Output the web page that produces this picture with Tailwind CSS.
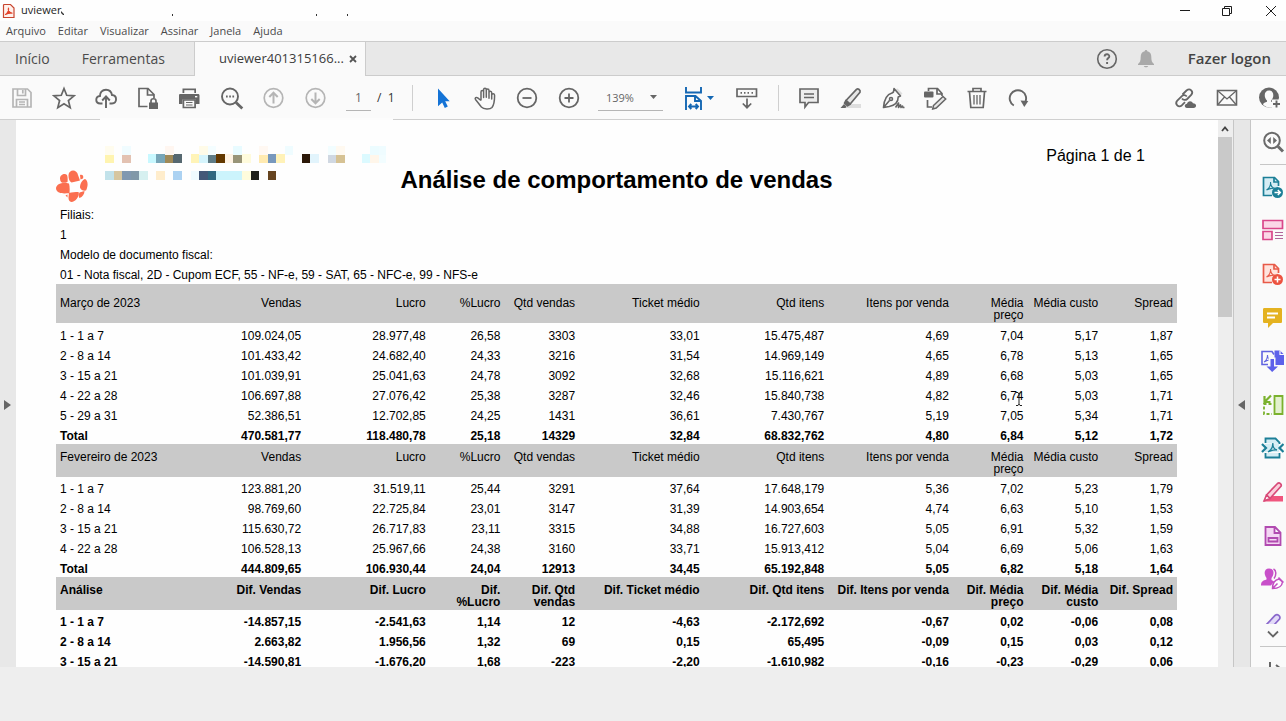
<!DOCTYPE html>
<html lang="pt-BR">
<head>
    <meta charset="UTF-8">
    <meta name="viewport" content="width=device-width, initial-scale=1.0">
    <title>uviewer</title>
    <script src="https://cdn.jsdelivr.net/npm/@tailwindcss/browser@4"></script>
</head>
<body class="h-screen flex flex-col overflow-hidden bg-[#eeeeee] text-[#4b4b4b] font-['Open_Sans','Noto_Sans',sans-serif]">

    <!-- Title bar -->
    <header class="h-[21px] shrink-0 flex items-center bg-[#fefefe] pl-[2px]">
        <svg class="w-[13px] h-4" viewBox="0 0 13 16" fill="none">
            <path d="M2 1.500h6.500L12 5v9.500H1.500V2z" fill="#fff1ec" stroke="#c8452f" stroke-width="1.200"/>
            <path d="M3.500 11.500c2-1 3.500-4 3-6.500-.8 2.500 1 5 3.500 5.200-2.500-.4-4.500.2-6.500 1.300z" fill="#e2442c" stroke="#e2442c" stroke-width="1.200" stroke-linejoin="round"/>
        </svg>
        <h1 class="ml-[6px] text-[11px] font-medium text-[#1c1c1c]">uviewer</h1>
        <svg class="w-[290px] h-3" viewBox="0 0 290 12" fill="#333">
            <path d="M0 6l3 3v1H2L0 8zM111 9h1v2h-1zM255 9h1v2h-1zM286 9h1v2h-1z"/>
        </svg>
        <div class="ml-auto flex text-[#1c1c1c]">
            <button class="w-[42px] flex justify-center" aria-label="Minimizar">
                <svg class="w-3 h-3" viewBox="0 0 12 12" stroke="currentColor"><path d="M1 5.500h10"/></svg>
            </button>
            <button class="w-[42px] flex justify-center" aria-label="Restaurar">
                <svg class="w-3 h-3" viewBox="0 0 12 12" fill="none" stroke="currentColor"><path d="M1.500 3.500h7v7h-7zM3.500 3V1.500h7v7H9"/></svg>
            </button>
            <button class="w-[38px] flex justify-end pr-[9px]" aria-label="Fechar">
                <svg class="w-3 h-3" viewBox="0 0 12 12" stroke="currentColor"><path d="M1 1l10 10M11 1L1 11"/></svg>
            </button>
        </div>
    </header>

    <!-- Menu -->
    <nav class="h-[20px] shrink-0 flex items-center gap-3 bg-[#fafafa] pl-[6px] text-[11px] leading-5">
        <button>Arquivo</button>
        <button>Editar</button>
        <button>Visualizar</button>
        <button>Assinar</button>
        <button>Janela</button>
        <button>Ajuda</button>
    </nav>

    <!-- Tabs -->
    <div class="h-[35px] shrink-0 flex bg-[#e8e8e8] border-t border-[#cccccc] text-[14px]">
        <div class="flex w-[195px] border-b border-r border-[#cccccc] pl-[15px] gap-8">
            <button>Início</button>
            <button>Ferramentas</button>
        </div>
        <div class="flex w-[170px] items-center justify-between bg-[#fafafa] pl-6 pr-2">
            <button class="text-[13px] text-[#3c3c3c]">uviewer401315166...</button>
            <button aria-label="Fechar guia">
                <svg class="w-2 h-2" viewBox="0 0 8 8" stroke="#555" stroke-width="1.800"><path d="M1 1l6 6M7 1L1 7"/></svg>
            </button>
        </div>
        <div class="flex flex-1 items-center justify-end border-b border-l border-[#cccccc] pr-[15px]">
            <button aria-label="Ajuda">
                <svg class="w-[22px] h-[22px]" viewBox="0 0 22 22" fill="none" stroke="#666" stroke-width="1.600">
                    <circle cx="11" cy="11" r="9.300"/>
                    <path d="M8.600 8.500c.2-3 4.800-2.800 4.700-.1 0 1.700-2.200 1.700-2.200 3.800M11.100 14v2" stroke-width="1.900"/>
                </svg>
            </button>
            <button class="ml-[18px]" aria-label="Notificações">
                <svg class="w-5 h-5" viewBox="0 0 20 20" fill="#a9a9a9"><path d="M10 1c.9 0 1.300.6 1.300 1.300 3 .7 4 3 4 5.700 0 4 .8 5.500 2.700 7v1H2v-1c1.900-1.500 2.700-3 2.700-7 0-2.700 1-5 4-5.700C8.700 1.600 9.100 1 10 1zM7.800 17h4.400c-.4 1.800-4 1.800-4.400 0z"/></svg>
            </button>
            <button class="ml-8 text-[15px] font-semibold text-[#444]">Fazer logon</button>
        </div>
    </div>

    <!-- Toolbar -->
    <div class="relative h-[44px] shrink-0 flex items-center bg-[#fafafa] border-b border-[#cfcfcf] pl-[1px] text-[#666]">
        <button class="w-[42px] shrink-0 flex justify-center text-[#b5b5b5]" aria-label="Salvar">
            <svg class="w-6 h-6" viewBox="0 0 24 24" fill="none" stroke="currentColor" stroke-width="1.700"><path d="M3 3h14.500L21 6.500V21H3zM7.500 3v6.500h8V3M12.800 4v3.500M6.500 21v-7.500h11V21M9 16h6M9 18.500h6"/></svg>
        </button>
        <button class="w-[42px] shrink-0 flex justify-center" aria-label="Favorito">
            <svg class="w-6 h-6" viewBox="0 0 24 24" fill="none" stroke="currentColor" stroke-width="1.700"><path d="M12 2.500l2.700 6.800 7.300.5-5.600 4.700 1.800 7.100-6.200-3.900-6.200 3.900 1.800-7.100L2 9.800l7.300-.5z"/></svg>
        </button>
        <button class="w-[42px] shrink-0 flex justify-center" aria-label="Enviar para a nuvem">
            <svg class="w-6 h-6" viewBox="0 0 24 24" fill="none" stroke="currentColor" stroke-width="1.900"><path d="M8.500 17.500H6.200C1 17.300 1 10.500 6 10c-.2-3.200 2-6.300 6-6.300 3.500 0 5.500 2.300 6 5.300 5.500.2 5.300 8.500 0 8.500h-2.500M12 22V10.800M8.200 14.500l3.800-4 3.800 4"/></svg>
        </button>
        <button class="w-[42px] shrink-0 flex justify-center" aria-label="Proteger documento">
            <svg class="w-6 h-6" viewBox="0 0 24 24" fill="none" stroke="currentColor" stroke-width="1.700"><path d="M11.500 20.500H3V2.500h9l6 6V12M11.500 3v6H18"/><path d="M13 16.500h9V23h-9z" fill="currentColor" stroke="none"/><path d="M15 17v-2c0-3 5-3 5 0v2"/></svg>
        </button>
        <button class="w-[42px] shrink-0 flex justify-center" aria-label="Imprimir">
            <svg class="w-6 h-6" viewBox="0 0 24 24" fill="none"><path d="M4.500 2.500h13.500V7H4.500zM2 8h18c1 0 1.500.6 1.500 1.500V18H18v-4.500H4.500V18H1V9.500C1 8.600 1.300 8 2 8z" fill="currentColor"/><path d="M6.300 4.200h10V7h-10z" fill="#fafafa"/><path d="M5.400 14h11.700v7.500H5.400z" fill="#fafafa" stroke="currentColor" stroke-width="1.700"/><path d="M8 16.500h6.500M8 19h6.500" stroke="currentColor" stroke-width="1.200"/><path d="M17 10.700h2.300" stroke="#fafafa" stroke-width="1.400"/></svg>
        </button>
        <button class="w-[42px] shrink-0 flex justify-center" aria-label="Localizar">
            <svg class="w-6 h-6" viewBox="0 0 24 24" fill="none" stroke="currentColor" stroke-width="1.900"><circle cx="10" cy="10.500" r="8"/><path d="M6 10.500h1.700M9.200 10.500h1.700M12.400 10.500h1.700"/><path d="M16 16.500l6.300 6" stroke-width="2.800"/></svg>
        </button>
        <button class="w-[42px] shrink-0 flex justify-center text-[#b5b5b5]" aria-label="Página anterior">
            <svg class="w-6 h-6" viewBox="0 0 24 24" fill="none" stroke="currentColor" stroke-width="1.700"><circle cx="11.500" cy="12" r="9.300"/><path d="M11.500 17.500V7M7.300 11l4.200-4.300 4.200 4.300" stroke-width="2"/></svg>
        </button>
        <button class="w-[42px] shrink-0 flex justify-center text-[#b5b5b5]" aria-label="Próxima página">
            <svg class="w-6 h-6" viewBox="0 0 24 24" fill="none" stroke="currentColor" stroke-width="1.700"><circle cx="11.500" cy="12" r="9.300"/><path d="M11.500 6.500V17M7.300 13l4.200 4.300 4.200-4.300" stroke-width="2"/></svg>
        </button>
        <input type="text" value="1" aria-label="Página" class="ml-[9px] w-[25px] h-[26px] shrink-0 border-b border-[#b5b5b5] text-center text-[12px]">
        <span class="ml-[6px] w-[17px] shrink-0 whitespace-nowrap text-[12px] text-[#333]">/&nbsp; 1</span>
        <div class="ml-[18px] w-px h-[26px] shrink-0 bg-[#cfcfcf]"></div>
        <button class="ml-[9px] w-[42px] shrink-0 flex justify-center" aria-label="Selecionar">
            <svg class="w-6 h-6" viewBox="0 0 24 24" fill="#1473d6"><path d="M7 2.500v17.800l4.200-3.800 2.600 5.500 3-1.400-2.600-5.300h4.500z"/></svg>
        </button>
        <button class="w-[42px] shrink-0 flex justify-center" aria-label="Mão">
            <svg class="w-6 h-6" viewBox="0 0 24 24" fill="none" stroke="currentColor" stroke-width="1.500" stroke-linejoin="round"><path d="M8 14.500V6c0-2 2.600-2 2.600 0v5.500V3.800c0-2 2.700-2 2.700 0v7.500V4.500c0-2 2.700-2 2.700 0v7.700V6.500c.2-1.700 2.700-1.700 2.700.3V13V9c.3-1.700 3-1.500 2.900.5 0 6-.3 9-2.600 12-2 2-8.400 2-10.600-.5L2.500 13.500c-1-1.500.8-2.700 2.200-1.700L8 14.500"/></svg>
        </button>
        <button class="w-[42px] shrink-0 flex justify-center" aria-label="Menos zoom">
            <svg class="w-6 h-6" viewBox="0 0 24 24" fill="none" stroke="currentColor" stroke-width="1.800"><circle cx="12" cy="12" r="9.300"/><path d="M7.500 12h9"/></svg>
        </button>
        <button class="w-[42px] shrink-0 flex justify-center" aria-label="Mais zoom">
            <svg class="w-6 h-6" viewBox="0 0 24 24" fill="none" stroke="currentColor" stroke-width="1.800"><circle cx="12" cy="12" r="9.300"/><path d="M7.500 12h9M12 7.500v9"/></svg>
        </button>
        <div class="relative ml-2 w-[65px] shrink-0">
            <select aria-label="Zoom" class="w-full h-[26px] appearance-none border-b border-[#b5b5b5] pl-2 text-[11px]">
                <option>139%</option>
            </select>
            <svg class="pointer-events-none absolute right-[6px] top-[11px] w-[7px] h-1" viewBox="0 0 7 4" fill="#666"><path d="M0 0h7L3.500 4z"/></svg>
        </div>
        <button class="ml-[21px] w-[31px] shrink-0 flex items-center gap-px text-[#1467b3]" aria-label="Ajustar largura">
            <svg class="w-[22px] h-6" viewBox="0 0 22 24" fill="none" stroke="currentColor" stroke-width="1.900"><path d="M2 1v5.500h15V1M2 24V10h9.500l5.500 5v9M11 10.500V15h5.500M5 20.500h9M7.300 18L5 20.500 7.300 23M11.700 18l2.300 2.500-2.300 2.500" stroke-linejoin="miter"/></svg>
            <svg class="w-[7px] h-1" viewBox="0 0 7 4" fill="currentColor"><path d="M0 0h7L3.500 4z"/></svg>
        </button>
        <button class="ml-[11px] w-[42px] shrink-0 flex justify-center" aria-label="Rolagem">
            <svg class="w-6 h-6" viewBox="0 0 24 24" fill="none" stroke="currentColor" stroke-width="1.700"><path d="M2 3h19.500v7.500H2zM5.500 6.800H7M9 6.800h1.500M12.500 6.800H14M16.500 6.800H18M12 12.500v9M7.800 17.500l4.200 4.200 4.200-4.200"/></svg>
        </button>
        <div class="ml-[10px] w-px h-[26px] shrink-0 bg-[#cfcfcf]"></div>
        <button class="ml-[9px] w-[42px] shrink-0 flex justify-center" aria-label="Comentário">
            <svg class="w-6 h-6" viewBox="0 0 24 24" fill="#ededed" stroke="currentColor" stroke-width="1.700"><path d="M3 3h18v13.500h-9.500L8 21v-4.500H3zM7 8h10M7 11.500h10"/></svg>
        </button>
        <button class="w-[42px] shrink-0 flex justify-center" aria-label="Realçar">
            <svg class="w-6 h-6" viewBox="0 0 24 24" fill="none" stroke="currentColor" stroke-width="1.700" stroke-linejoin="round"><path d="M11 18h11v4H6z" fill="#dedede" stroke="none"/><path d="M7 14.500L17.500 3.300c1.500-1.200 4.300.8 3.500 3L11 18.200z" fill="#e6e6e6"/><path d="M7 14.500l4 3.700-2.500 1.600-3-2.700z" fill="currentColor"/><path d="M5 18l2.500 2.500-1 1.500H1.500z" fill="currentColor" stroke="none"/></svg>
        </button>
        <button class="w-[42px] shrink-0 flex justify-center" aria-label="Assinar">
            <svg class="w-6 h-6" viewBox="0 0 24 24" fill="none" stroke="currentColor" stroke-width="1.600" stroke-linejoin="round"><path d="M14 3.500l2.500-1 5 5-2.500 2.500z" fill="#dedede" stroke="none"/><path d="M13 2.500l6.500 7.500-2.300 1c0 5-3 8.300-9 9.500L2.500 21.500c.5-7 2-12.700 8.500-14.500l1.500-1zM2.500 21.500l6-7"/><circle cx="10" cy="13" r="1.500"/><path d="M14.500 21.500l3-4.500v4.500l2-2.700.5 2.700 1.500-1.500.5 1.500h1.500"/></svg>
        </button>
        <button class="w-[42px] shrink-0 flex justify-center" aria-label="Editar PDF">
            <svg class="w-6 h-6" viewBox="0 0 24 24" fill="none" stroke="currentColor" stroke-width="1.700"><path d="M5.500 5V2.500h9L19 7.500V10M14 3v5h5M4.500 14v7H9"/><rect x="1" y="5.500" width="9.500" height="6" rx="1" fill="currentColor" stroke="none"/><path d="M10.500 19.500l9.500-9 2.700 2.500-9.500 9-3.500 1z" fill="#e6e6e6" stroke-width="1.500"/></svg>
        </button>
        <button class="w-[42px] shrink-0 flex justify-center" aria-label="Excluir">
            <svg class="w-6 h-6" viewBox="0 0 24 24" fill="none" stroke="currentColor" stroke-width="1.700"><path d="M2.500 5.500h19M8 5V2.500h8V5M4.500 6l1.300 15.500h12.400L19.500 6"/><path d="M9 9v9.500M12 9v9.500M15 9v9.500" stroke-width="1.300"/></svg>
        </button>
        <button class="w-[42px] shrink-0 flex justify-center" aria-label="Girar">
            <svg class="w-6 h-6" viewBox="0 0 24 24" fill="none" stroke="currentColor" stroke-width="1.900"><path d="M6.800 19.500A8.200 8.200 0 1 1 18 16.500"/><path d="M13.500 14.500l7.800.5-4 6z" fill="currentColor" stroke="none"/></svg>
        </button>
        <button class="ml-auto w-[42px] shrink-0 flex justify-center" aria-label="Compartilhar link">
            <svg class="w-6 h-6" viewBox="0 0 24 24" fill="none" stroke="currentColor" stroke-width="1.800"><path d="M9.500 8.500l4-4c3.500-3 7.500 1 4.700 4.500l-4 4c-1.700 1.500-4 1.200-5.200-.5M13.800 10.500c-1.500-1.700-3.700-1.700-5.200-.2l-4.300 4.200c-3 3.500 1.200 7.700 4.700 4.700l3-3"/><path d="M14 22c-3-.2-2.800-4 0-4.200.5-3.300 5-3.500 6-.5 4 0 4 4.700.5 4.700z" fill="currentColor" stroke="none"/></svg>
        </button>
        <button class="w-[42px] shrink-0 flex justify-center" aria-label="Enviar por e-mail">
            <svg class="w-6 h-6" viewBox="0 0 24 24" fill="none" stroke="currentColor" stroke-width="1.600"><path d="M2.500 4.500h19v14.500h-19z"/><path d="M3 5l9 8 9-8M3 18.500l6.500-7.500M21 18.500L14.500 11" stroke-width="1.300"/></svg>
        </button>
        <button class="w-[38px] shrink-0 flex pl-[10px]" aria-label="Conta">
            <svg class="w-6 h-6" viewBox="0 0 24 24" fill="none"><circle cx="11" cy="11.500" r="10" fill="currentColor"/><path d="M5 18.500c.3-1.500 2.200-2 4-2.700v-1.300C5.500 11 6 4.500 11 4.500s5.500 6.500 2.200 10v1.300c1 .4 2 .7 2.800 1.200v3c-3 2.300-8 2-11-1.500z" fill="#fafafa"/><path d="M14 13.500h9.500V23H14z" fill="#fafafa"/><path d="M18.500 14.500v7M15 18h7" stroke="currentColor" stroke-width="1.900"/></svg>
        </button>
        <span class="absolute left-[100px] -bottom-px w-[293px] h-[2px] bg-[#fcfcfc]"></span>
    </div>

    <!-- Viewer -->
    <main class="relative flex-1 min-h-0 flex overflow-hidden">
        <button class="w-4 shrink-0 flex items-center bg-[#e8e8e8] pl-1 pt-[23px]" aria-label="Abrir painel esquerdo">
            <svg class="w-[7px] h-[10px]" viewBox="0 0 7 10" fill="#666"><path d="M0 0l7 5-7 5z"/></svg>
        </button>

        <article class="relative flex-1 min-w-0 bg-[#fefefe] pl-10 pr-[41px] pt-[26px] text-[12px] text-black font-['Liberation_Sans',Arial,sans-serif]">
            <div class="h-[57px] grid grid-cols-[1fr_auto_1fr]">
                <div class="flex items-start">
                    <!-- Logo -->
                    <svg class="mt-6 w-8 h-8 shrink-0" viewBox="0 0 32 32" fill="#fb6f50">
                        <path d="M12.500 5c.5-6 8.500-6 9.500 0l2 5.500c-2.500 1-5.500 1.200-8.500 2-2.500-1.500-3-4-3-7.500zM4 8.500C4 4.500 9 3 11 5c.8 2 .8 4.500.5 7-3.500 1.500-7.500 1.500-7.500-3.500zM0 18c.5-4 6-6 13-4.500.8 3 .8 6 .5 9.500C7 24 0 23.500 0 18zM24 17.500c0-3.500 2-7.500 5-8.500 3 1 3.500 7 1 11.500-2 .5-5 0-6-3zM13 23c3-.8 6-1 9.500-1 1.500 3-2.500 10-7 10-4-1-3-5-2.500-9zM23.500 22.500l5-1.500c0 3-2 6-5 7-1-1-1-3.500 0-5.500zM24 5c2-1 4 .5 3 3.500l-2.500 1zM9.500 25.500l2-1v3z"/>
                    </svg>
                    <!-- Censored company data -->
                    <svg id="mosaic" class="ml-[17px] w-[281px] h-9" viewBox="0 0 281 36" shape-rendering="crispEdges"></svg>
                </div>
                <h2 class="pt-[20px] text-[24px] leading-7 font-bold whitespace-nowrap">Análise de comportamento de vendas</h2>
                <p class="pr-8 text-right text-[16px] leading-5">Página 1 de 1</p>
            </div>
            <div class="flex flex-col gap-1 pt-1 pb-px pl-1 leading-4">
                <p>Filiais:</p>
                <p>1</p>
                <p>Modelo de documento fiscal:</p>
                <p>01 - Nota fiscal, 2D - Cupom ECF, 55 - NF-e, 59 - SAT, 65 - NFC-e, 99 - NFS-e</p>
            </div>
            <div id="report"></div>

            <!-- Text cursor -->
            <svg class="absolute left-[999px] top-[271px] w-2 h-4" viewBox="0 0 8 16" fill="none" stroke="#222"><path d="M1 1.500h2L4 3l1-1.500h2M4 3v10M1 14.500h2L4 13l1 1.500h2"/></svg>
        </article>

        <!-- Scrollbar -->
        <div class="w-[15px] shrink-0 bg-[#eeeeee] pr-px">
            <button class="w-full h-[17px] flex items-center justify-center" aria-label="Rolar para cima">
                <svg class="w-2 h-[6px]" viewBox="0 0 8 6" fill="none" stroke="#444" stroke-width="1.800"><path d="M1 5l3-3.500L7 5"/></svg>
            </button>
            <div class="h-[180px] bg-[#c9c9c9]"></div>
        </div>
        <button class="w-[18px] shrink-0 flex items-center border-x border-[#c6c6c6] bg-[#e7e7e7] pl-1 pt-[23px]" aria-label="Fechar painel direito">
            <svg class="w-[7px] h-[10px]" viewBox="0 0 7 10" fill="#666"><path d="M7 0L0 5l7 5z"/></svg>
        </button>

        <!-- Tools -->
        <aside class="w-[35px] shrink-0 overflow-hidden bg-[#fafafa] pl-[9px]">
            <button class="w-full h-[44px] flex items-center pl-px" aria-label="Pesquisar ferramentas">
                <svg class="w-6 h-6" viewBox="0 0 24 24" fill="none" stroke="#6a6a6a" stroke-width="2"><circle cx="11" cy="10.500" r="7.800"/><path d="M17 16.500l5 5" stroke-width="3"/><path d="M9.800 7v7L6 10.500zM12.200 7v7l3.800-3.500z" fill="#6a6a6a" stroke="none"/></svg>
            </button>
            <div class="border-t border-[#c6c6c6]">
                <button class="w-full h-[43px] flex items-center pl-px" aria-label="Exportar PDF">
                    <svg class="w-6 h-6" viewBox="0 0 24 24" fill="none" stroke="#1c7f97" stroke-width="1.700"><path d="M11 20.500H2.500V2.500h11L17.500 6.500V11" fill="#d5edf4"/><path d="M13 2.500V7h4.500"/><path d="M5.500 15c2.500-1.500 4.300-5 4-8 0 3.500 1.500 6 4.500 6.300-3.200-.3-5.700.4-8.500 1.700z" stroke-width="1.100"/><circle cx="16.500" cy="17.500" r="5.500" fill="#1c7f97" stroke="none"/><path d="M13.500 17.500h5.500M16.800 15l2.500 2.500-2.500 2.500" stroke="#fff" stroke-width="1.500"/></svg>
                </button>
                <button class="w-full h-[44px] flex items-center pl-px" aria-label="Organizar páginas">
                    <svg class="w-6 h-6" viewBox="0 0 24 24" fill="#fbd7e7" stroke="#d9478a" stroke-width="1.700"><path d="M2 2.500h19.500v8H2zM2 13.500h9v8H2z"/><path d="M14 14.500h8M14 17.500h8M14 20.500h8" stroke="#b0669a" stroke-width="1.200"/></svg>
                </button>
                <button class="w-full h-[44px] flex items-center pl-px" aria-label="Criar PDF">
                    <svg class="w-6 h-6" viewBox="0 0 24 24" fill="none" stroke="#e85a48" stroke-width="1.700"><path d="M11 20.500H2.500V2.500h11L17.500 6.500V11" fill="#ffe3dd"/><path d="M13 2.500V7h4.500"/><path d="M5.500 15c2.500-1.500 4.300-5 4-8 0 3.500 1.500 6 4.500 6.300-3.200-.3-5.700.4-8.500 1.700z" stroke-width="1.100"/><circle cx="16.500" cy="17.500" r="5.500" fill="#ed5340" stroke="none"/><path d="M13.500 17.500h6M16.500 14.500v6" stroke="#fff" stroke-width="1.500"/></svg>
                </button>
                <button class="w-full h-[43px] flex items-center pl-px" aria-label="Comentário">
                    <svg class="w-6 h-6" viewBox="0 0 24 24" fill="#e4b220"><path d="M3.500 2h16c1 0 1.500.5 1.500 1.500v12c0 1-.5 1.500-1.500 1.500H12l-5 5v-5H3.500C2.500 17 2 16.500 2 15.500v-12C2 2.500 2.500 2 3.500 2z"/><path d="M6 7.500h11M6 11.500h8" stroke="#fff" stroke-width="1.800"/></svg>
                </button>
                <button class="w-full h-[44px] flex items-center" aria-label="Combinar arquivos">
                    <svg class="w-6 h-6" viewBox="0 0 24 24" fill="none" stroke="#6164e0" stroke-width="1.600"><path d="M8 15.500H2v-13h10l2 3"/><path d="M14.500 1.500h5.500l4 4V16h-9.500z" fill="#5d61ea" stroke="none"/><path d="M20 1.500v4h4" stroke="#fafafa" stroke-width="1.200"/><path d="M4 13c2.500-1.500 3.500-3.500 3.500-7 0 3.200 1 4.500 3.500 5-3-.2-4.500.5-7 2z" stroke-width="1.100"/><path d="M8.500 8.500h7V17H19l-7 7-7-7h3.500z" fill="#fafafa" stroke="none"/><path d="M10.500 10h3.500v7.500h4L12.200 23l-5.700-5.500h4z" fill="#5d61ea" stroke="none"/></svg>
                </button>
                <button class="w-full h-[43px] flex items-center pl-px" aria-label="Comprimir páginas">
                    <svg class="w-6 h-6" viewBox="0 0 24 24" fill="none" stroke="#7bb22e" stroke-width="1.800"><path d="M13.500 3h8v18h-8z" fill="#e3f1cf"/><path d="M10.500 11H3v10h8" stroke-dasharray="3 2"/><path d="M10 2.500L4.500 8M3.500 3v6h6" stroke-width="2.200"/></svg>
                </button>
                <button class="w-full h-[44px] flex items-center" aria-label="Otimizar PDF">
                    <svg class="w-6 h-6" viewBox="0 0 24 24" fill="none" stroke="#1c7f97" stroke-width="1.800"><path d="M5 8h14v8H5z" fill="#d5edf4" stroke="none"/><path d="M5.500 7V2.500h10l4 4V8M5.500 17v4.500h14V17" fill="#d5edf4"/><path d="M2 8l4 4-4 4M23.500 8l-4 4 4 4" stroke-width="2.200"/><path d="M8 16c3-1.800 5-5.500 4.800-9 0 4 1.200 6.500 4.200 7-3-.2-5.800.5-9 2z" stroke-width="1.300"/></svg>
                </button>
                <button class="w-full h-[44px] flex items-center pl-px" aria-label="Redigir">
                    <svg class="w-6 h-6" viewBox="0 0 24 24" fill="none" stroke="#d84a78" stroke-width="1.700" stroke-linejoin="round"><path d="M11 16h11v5.500H1.500z" fill="#f0567e" stroke="none"/><path d="M5.500 15L16.500 3.500c2-1.500 4.500.8 3.500 2.800L9 18.500z" fill="#fbd0dc"/><path d="M5.500 15l3.500 3.500-6 2.500z" fill="#fff"/></svg>
                </button>
                <button class="w-full h-[43px] flex items-center pl-px" aria-label="Preparar formulário">
                    <svg class="w-6 h-6" viewBox="0 0 24 24" fill="#f4d6f3" stroke="#b14ab0" stroke-width="1.800"><path d="M4.500 3H14l5.500 5.500V21h-15zM13.500 3v6h6M7.500 14h9v3.500h-9z"/></svg>
                </button>
                <button class="w-full h-[43px] flex items-center" aria-label="Solicitar assinaturas">
                    <svg class="w-6 h-6" viewBox="0 0 24 24" fill="none" stroke="#c14fc2" stroke-width="1.500"><path d="M9 1.500c5.500 0 5.500 6 2.500 9.500v2l2.500 1.500-3 4H1c0-4 2-5 5.500-6V11C3.500 7 4 1.500 9 1.500z" fill="#c84fc9" stroke="none"/><path d="M13.500 2c3 1.500 3 6 .5 9.500"/><path d="M12.500 21.500c0-5 1.500-8.500 6.500-9.500l3.500 3c-.5 4.500-4.500 6.500-10 6.500zM12.500 21.500l5-5M18.500 10.500l5 5" fill="#fff"/></svg>
                </button>
                <button class="w-full h-[27px] flex items-start overflow-hidden pt-3 pl-px" aria-label="Preencher e assinar">
                    <svg class="w-6 h-3 shrink-0" viewBox="0 0 24 12" fill="#e2daf8" stroke="#8a68cc" stroke-width="1.700"><path d="M5 13L14 3.500c2.500-2 6 .5 4.500 3.500L13 13"/></svg>
                </button>
                <button class="w-full h-[19px] flex items-start pt-[3px] pl-[7px]" aria-label="Mais ferramentas">
                    <svg class="w-3 h-2" viewBox="0 0 12 8" fill="none" stroke="#666" stroke-width="1.800"><path d="M1 1.500l5 5 5-5"/></svg>
                </button>
            </div>
            <button class="w-full h-[32px] border-t border-[#c6c6c6] pt-[13px] pl-[7px]" aria-label="Recolher">
                <svg class="w-4 h-4" viewBox="0 0 16 16" fill="none" stroke="#666" stroke-width="2"><path d="M3 1v14M9 4l5 4-5 4"/></svg>
            </button>
        </aside>
    </main>

    <footer class="h-[54px] shrink-0 bg-[#eeeeee]"></footer>

    <script>
        const monthHeaders = ['Vendas', 'Lucro', '%Lucro', 'Qtd vendas', 'Ticket médio', 'Qtd itens', 'Itens por venda', 'Média<br>preço', 'Média custo', 'Spread'];

        const blocks = [
            {
                headers: ['Março de 2023', ...monthHeaders],
                rows: [
                    ['1 - 1 a 7', '109.024,05', '28.977,48', '26,58', '3303', '33,01', '15.475,487', '4,69', '7,04', '5,17', '1,87'],
                    ['2 - 8 a 14', '101.433,42', '24.682,40', '24,33', '3216', '31,54', '14.969,149', '4,65', '6,78', '5,13', '1,65'],
                    ['3 - 15 a 21', '101.039,91', '25.041,63', '24,78', '3092', '32,68', '15.116,621', '4,89', '6,68', '5,03', '1,65'],
                    ['4 - 22 a 28', '106.697,88', '27.076,42', '25,38', '3287', '32,46', '15.840,738', '4,82', '6,74', '5,03', '1,71'],
                    ['5 - 29 a 31', '52.386,51', '12.702,85', '24,25', '1431', '36,61', '7.430,767', '5,19', '7,05', '5,34', '1,71'],
                    ['Total', '470.581,77', '118.480,78', '25,18', '14329', '32,84', '68.832,762', '4,80', '6,84', '5,12', '1,72']
                ]
            },
            {
                headers: ['Fevereiro de 2023', ...monthHeaders],
                rows: [
                    ['1 - 1 a 7', '123.881,20', '31.519,11', '25,44', '3291', '37,64', '17.648,179', '5,36', '7,02', '5,23', '1,79'],
                    ['2 - 8 a 14', '98.769,60', '22.725,84', '23,01', '3147', '31,39', '14.903,654', '4,74', '6,63', '5,10', '1,53'],
                    ['3 - 15 a 21', '115.630,72', '26.717,83', '23,11', '3315', '34,88', '16.727,603', '5,05', '6,91', '5,32', '1,59'],
                    ['4 - 22 a 28', '106.528,13', '25.967,66', '24,38', '3160', '33,71', '15.913,412', '5,04', '6,69', '5,06', '1,63'],
                    ['Total', '444.809,65', '106.930,44', '24,04', '12913', '34,45', '65.192,848', '5,05', '6,82', '5,18', '1,64']
                ]
            },
            {
                bold: true,
                headers: ['Análise', 'Dif. Vendas', 'Dif. Lucro', 'Dif.<br>%Lucro', 'Dif. Qtd<br>vendas', 'Dif. Ticket médio', 'Dif. Qtd itens', 'Dif. Itens por venda', 'Dif. Média<br>preço', 'Dif. Média<br>custo', 'Dif. Spread'],
                rows: [
                    ['1 - 1 a 7', '-14.857,15', '-2.541,63', '1,14', '12', '-4,63', '-2.172,692', '-0,67', '0,02', '-0,06', '0,08'],
                    ['2 - 8 a 14', '2.663,82', '1.956,56', '1,32', '69', '0,15', '65,495', '-0,09', '0,15', '0,03', '0,12'],
                    ['3 - 15 a 21', '-14.590,81', '-1.676,20', '1,68', '-223', '-2,20', '-1.610,982', '-0,16', '-0,23', '-0,29', '0,06']
                ]
            }
        ];

        // Column widths, shared by every block of the report
        const wide = 'w-[11.11%]';
        const narrow = 'w-[6.66%]';
        const cols = [wide, wide, wide, narrow, narrow, wide, wide, wide, narrow, narrow, narrow];

        document.getElementById('report').innerHTML = blocks.map((block, index) => {
            const first = index === 0;
            const head = block.headers.map((text, i) => {
                const align = i === 0 ? 'pl-1 text-left' : 'pr-1 text-right';
                const weight = block.bold ? 'font-bold' : 'font-normal';
                const top = first ? 'pt-[13px]' : 'pt-[7px]';
                return `<th scope="col" class="${cols[i]} ${align} ${weight} ${top} align-top leading-3 whitespace-nowrap">${text}</th>`;
            }).join('');
            const body = block.rows.map((row) => {
                const total = row[0] === 'Total';
                const weight = total || block.bold ? 'font-bold' : 'font-normal';
                const cells = row.map((text, i) => i === 0
                    ? `<th scope="row" class="pl-1 pt-[2px] text-left whitespace-nowrap ${weight}">${text}</th>`
                    : `<td class="pr-1 pt-[2px] text-right">${text}</td>`).join('');
                return `<tr class="${total ? 'h-[19px]' : 'h-5'} ${weight}">${cells}</tr>`;
            }).join('');
            return `<table class="w-full table-fixed leading-4">
                <thead class="bg-[#c9c9c9]"><tr class="${first ? 'h-[39px]' : 'h-[33px]'}">${head}</tr></thead>
                <tbody class="before:block ${first ? 'before:h-[2px]' : 'before:h-px'}">${body}</tbody>
            </table>`;
        }).join('');

        // Mosaic tiles: [column, row, colour]
        const tiles = [
            [0, 1, '#fff4b0'], [2, 1, '#e3c2b2'], [5, 1, '#c8f8ff'], [6, 1, '#78a6b8'], [7, 1, '#a08a58'], [8, 1, '#566870'],
            [10, 1, '#fff4b8'], [11, 1, '#d5f4fc'], [12, 1, '#5f7c86'], [13, 1, '#633800'], [14, 1, '#fff3e4'], [15, 1, '#989478'], [16, 1, '#fffbdc'],
            [18, 1, '#ffeab0'], [19, 1, '#7898bc'], [20, 1, '#fff2b8'], [23, 1, '#2c1808'], [24, 1, '#e2f4fc'], [26, 1, '#d0d8e2'], [27, 1, '#d6c294'],
            [30, 1, '#dcfaff'], [31, 1, '#fff6ea'], [32, 1, '#f2fdff'],
            [0, 0, '#fffcee'], [2, 0, '#f0fcff'], [7, 0, '#fff6f0'], [11, 0, '#fffbe8'], [12, 0, '#f4fdff'], [15, 0, '#e8fbff'], [18, 0, '#fff8f2'], [21, 0, '#effcff'], [26, 0, '#f2fdff'], [27, 0, '#fff9f0'], [31, 0, '#ecfcff'], [32, 0, '#effcff'],
            [0, 2, '#c2e2ea'], [1, 2, '#d6c6a0'], [2, 2, '#8098b0'], [3, 2, '#8098a8'], [4, 2, '#d6f0f0'], [6, 2, '#ffedcc'], [8, 2, '#acd2f2'],
            [10, 2, '#f0fbff'], [11, 2, '#445878'], [12, 2, '#306880'], [13, 2, '#ccf4fc'], [14, 2, '#ccf4fc'], [15, 2, '#ccf4fc'], [16, 2, '#fffcdc'], [17, 2, '#20201a'], [19, 2, '#664420']
        ];
        const tops = [0, 8, 25];
        document.getElementById('mosaic').innerHTML = tiles.map(([col, row, colour]) =>
            `<rect x="${col * 8.56}" y="${tops[row]}" width="8.6" height="9" fill="${colour}"/>`).join('');
    </script>
</body>
</html>
